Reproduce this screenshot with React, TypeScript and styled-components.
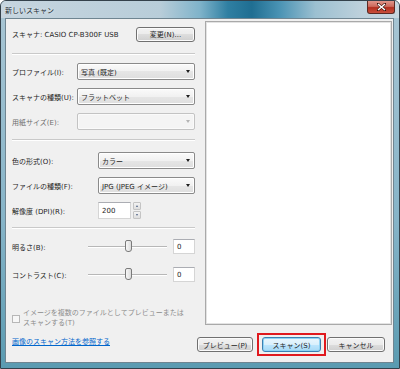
import styled, { createGlobalStyle } from "styled-components";

const GlobalStyle = createGlobalStyle`
  html, body {
    margin: 0;
    padding: 0;
    background: #ffffff;
  }
  body {
    font-family: "DejaVu Sans", "Noto Sans CJK JP", sans-serif;
    font-size: 7px;
    color: #1e1e1e;
  }
`;

const Window = styled.div`
  position: relative;
  width: 400px;
  height: 369px;
  box-sizing: border-box;
  border: 1px solid #34414b;
  border-radius: 6px 6px 0 0;
  background: linear-gradient(180deg, #a9c6d4 0%, #86b4c8 60%, #5a9bb1 100%);
  display: flex;
  flex-direction: column;
  overflow: hidden;
`;

const TitleBar = styled.div`
  position: relative;
  height: 17px;
  flex-shrink: 0;
  display: flex;
  align-items: center;
  padding-left: 4px;
  font-size: 7px;
  color: #1a2a33;
  background: linear-gradient(90deg, #c6d5df 0%, #b8cdd9 40%, #7fb3ca 50%, #2f7fa2 57%, #1f6e92 63%, #4a93b4 70%, #9cc0d1 79%, #bcd0db 90%, #c6d6df 100%);
`;

const TitleText = styled.span`
  text-shadow: 0 0 3px rgba(255, 255, 255, 0.9);
`;

const CloseButton = styled.div`
  position: absolute;
  top: 0;
  right: 4px;
  width: 26px;
  height: 12px;
  border: 1px solid #5a2a24;
  border-top: none;
  border-radius: 0 0 3px 3px;
  background: linear-gradient(#e0958a 0%, #cc6a5d 45%, #b22e1f 55%, #c9503c 100%);
  display: flex;
  align-items: center;
  justify-content: center;
`;

const Client = styled.div`
  flex: 1;
  margin: 0 5px 5px 4px;
  border: 1px solid #6f8591;
  background: #f0f0f0;
  display: flex;
  flex-direction: column;
  padding: 2px 8px 0 6px;
`;

const TopRow = styled.div`
  display: flex;
  gap: 10px;
`;

const LeftColumn = styled.div`
  width: 183px;
  padding-top: 5px;
  display: flex;
  flex-direction: column;
`;

const Preview = styled.div`
  width: 186px;
  height: 302px;
  margin-right: -7px;
  background: #ffffff;
  border: 1px solid #a9a9a9;
  box-shadow: inset 0 0 0 1px #e3e3e3;
`;

const ScannerRow = styled.div`
  height: 16px;
  display: flex;
  align-items: center;
  justify-content: space-between;
`;

const Button = styled.div<{ $w: number; $primary?: boolean }>`
  width: ${(p) => p.$w}px;
  height: 15px;
  box-sizing: border-box;
  border: 1px solid ${(p) => (p.$primary ? "#3c7fb1" : "#707070")};
  border-radius: 3px;
  background: ${(p) =>
    p.$primary
      ? "linear-gradient(#eaf6fd 0%, #d9f0fc 50%, #bee6fd 50%, #a7d9f5 100%)"
      : "linear-gradient(#f2f2f2 0%, #ebebeb 50%, #dddddd 50%, #cfcfcf 100%)"};
  box-shadow: inset 0 0 0 1px ${(p) => (p.$primary ? "#8fd3f4" : "#fbfbfb")};
  display: flex;
  align-items: center;
  justify-content: center;
  color: #1e1e1e;
`;

const Separator = styled.div<{ $top: number }>`
  margin-top: ${(p) => p.$top}px;
  height: 0;
  border-top: 1px solid #c9c9c9;
  border-bottom: 1px solid #ffffff;
`;

const FormGrid = styled.div<{ $label: number; $top: number }>`
  margin-top: ${(p) => p.$top}px;
  display: grid;
  grid-template-columns: ${(p) => p.$label}px 1fr;
  row-gap: 8px;
  align-items: center;
`;

const Label = styled.span<{ $disabled?: boolean }>`
  color: ${(p) => (p.$disabled ? "#6d6d6d" : "#1e1e1e")};
  white-space: nowrap;
`;

const Select = styled.div<{ $disabled?: boolean }>`
  height: 17px;
  box-sizing: border-box;
  border: 1px solid ${(p) => (p.$disabled ? "#c3c3c3" : "#8a8a8a")};
  border-radius: 2px;
  background: ${(p) =>
    p.$disabled
      ? "#f4f4f4"
      : "linear-gradient(#fafafa 0%, #f1f1f1 50%, #e6e6e6 50%, #dedede 100%)"};
  box-shadow: inset 0 0 0 1px ${(p) => (p.$disabled ? "#fafafa" : "#ffffff")};
  display: flex;
  align-items: center;
  justify-content: space-between;
  padding: 0 3px 0 3px;
`;

const Arrow = styled.span<{ $disabled?: boolean }>`
  width: 0;
  height: 0;
  border-left: 2.5px solid transparent;
  border-right: 2.5px solid transparent;
  border-top: 3px solid ${(p) => (p.$disabled ? "#b4b4b4" : "#1e1e1e")};
  margin-right: 1px;
`;

const SpinRow = styled.div`
  display: flex;
  align-items: stretch;
  height: 17px;
`;

const TextBox = styled.div<{ $w: number; $h: number }>`
  width: ${(p) => p.$w}px;
  height: ${(p) => p.$h}px;
  box-sizing: border-box;
  background: #ffffff;
  border: 1px solid #d5d5d5;
  border-top-color: #abadb3;
  display: flex;
  align-items: center;
  padding-left: 3px;
`;

const Spinner = styled.div`
  width: 8px;
  margin-left: 2px;
  display: flex;
  flex-direction: column;
  gap: 1px;
`;

const SpinPart = styled.div<{ $up?: boolean }>`
  flex: 1;
  border: 1px solid #c4c4c4;
  border-radius: 1px;
  background: linear-gradient(#f3f3f3, #dedede);
  display: flex;
  align-items: center;
  justify-content: center;
  &::after {
    content: "";
    border-left: 1.5px solid transparent;
    border-right: 1.5px solid transparent;
    ${(p) =>
      p.$up ? "border-bottom: 2px solid #4d6185;" : "border-top: 2px solid #4d6185;"}
  }
`;

const SliderGrid = styled.div`
  margin-top: 10px;
  display: grid;
  grid-template-columns: 70px 79px 22px;
  column-gap: 6px;
  row-gap: 13px;
  align-items: center;
`;

const Track = styled.div`
  position: relative;
  height: 2px;
  border-top: 1px solid #b7b7b7;
  border-bottom: 1px solid #ffffff;
  box-sizing: border-box;
`;

const Thumb = styled.div`
  position: absolute;
  left: 37px;
  top: -7px;
  width: 7px;
  height: 12px;
  box-sizing: border-box;
  border: 1px solid #7a7a7a;
  border-radius: 2px 2px 3px 3px;
  background: linear-gradient(90deg, #f7f7f7, #dcdcdc);
`;

const CheckRow = styled.div`
  margin-top: 26px;
  display: flex;
  gap: 3px;
  color: #8c8c8c;
  line-height: 10px;
`;

const CheckBox = styled.div`
  width: 8px;
  height: 8px;
  margin-top: 7px;
  box-sizing: border-box;
  border: 1px solid #b7b7b7;
  background: #f7f7f7;
  flex-shrink: 0;
`;

const BottomRow = styled.div`
  margin-top: 4px;
  display: flex;
  align-items: flex-start;
`;

const Link = styled.a`
  margin-top: 5px;
  color: #0066cc;
  text-decoration: underline;
  line-height: 10px;
  cursor: pointer;
`;

const Buttons = styled.div`
  margin-left: auto;
  display: flex;
  align-items: center;
  margin-top: 5px;
`;

const Highlight = styled.div`
  position: relative;
  margin: 0 6px 0 9px;
  &::after {
    content: "";
    position: absolute;
    left: -5px;
    top: -4px;
    right: -5px;
    bottom: -4px;
    border: 2px solid #e0191e;
  }
`;

export default function App() {
  return (
    <>
      <GlobalStyle />
      <Window>
        <TitleBar>
          <TitleText>新しいスキャン</TitleText>
        </TitleBar>
        <CloseButton>
          <svg width="9" height="8" viewBox="0 0 9 8">
            <path
              d="M1 1 L8 7 M8 1 L1 7"
              stroke="#3a120c"
              strokeWidth="2.6"
              strokeLinecap="square"
            />
            <path d="M1 1 L8 7 M8 1 L1 7" stroke="#ffffff" strokeWidth="1.6" />
          </svg>
        </CloseButton>
        <Client>
          <TopRow>
            <LeftColumn>
              <ScannerRow>
                <Label>スキャナ: CASIO CP-B300F USB</Label>
                <Button $w={59}>変更(N)...</Button>
              </ScannerRow>
              <Separator $top={11} />
              <FormGrid $label={65} $top={8}>
                <Label>プロファイル(I):</Label>
                <Select>
                  <span>写真 (既定)</span>
                  <Arrow />
                </Select>
                <Label>スキャナの種類(U):</Label>
                <Select>
                  <span>フラットベット</span>
                  <Arrow />
                </Select>
                <Label $disabled>用紙サイズ(E):</Label>
                <Select $disabled>
                  <span />
                  <Arrow $disabled />
                </Select>
              </FormGrid>
              <Separator $top={9} />
              <FormGrid $label={86} $top={11}>
                <Label>色の形式(O):</Label>
                <Select>
                  <span>カラー</span>
                  <Arrow />
                </Select>
                <Label>ファイルの種類(F):</Label>
                <Select>
                  <span>JPG (JPEG イメージ)</span>
                  <Arrow />
                </Select>
                <Label>解像度 (DPI)(R):</Label>
                <SpinRow>
                  <TextBox $w={33} $h={17}>200</TextBox>
                  <Spinner>
                    <SpinPart $up />
                    <SpinPart />
                  </Spinner>
                </SpinRow>
              </FormGrid>
              <Separator $top={8} />
              <SliderGrid>
                <Label>明るさ(B):</Label>
                <Track>
                  <Thumb />
                </Track>
                <TextBox $w={22} $h={15}>0</TextBox>
                <Label>コントラスト(C):</Label>
                <Track>
                  <Thumb />
                </Track>
                <TextBox $w={22} $h={15}>0</TextBox>
              </SliderGrid>
              <CheckRow>
                <CheckBox />
                <span>
                  イメージを複数のファイルとしてプレビューまたは
                  <br />
                  スキャンする(T)
                </span>
              </CheckRow>
            </LeftColumn>
            <Preview />
          </TopRow>
          <BottomRow>
            <Link>画像のスキャン方法を参照する</Link>
            <Buttons>
              <Button $w={56}>プレビュー(P)</Button>
              <Highlight>
                <Button $w={59} $primary>
                  スキャン(S)
                </Button>
              </Highlight>
              <Button $w={58}>キャンセル</Button>
            </Buttons>
          </BottomRow>
        </Client>
      </Window>
    </>
  );
}
